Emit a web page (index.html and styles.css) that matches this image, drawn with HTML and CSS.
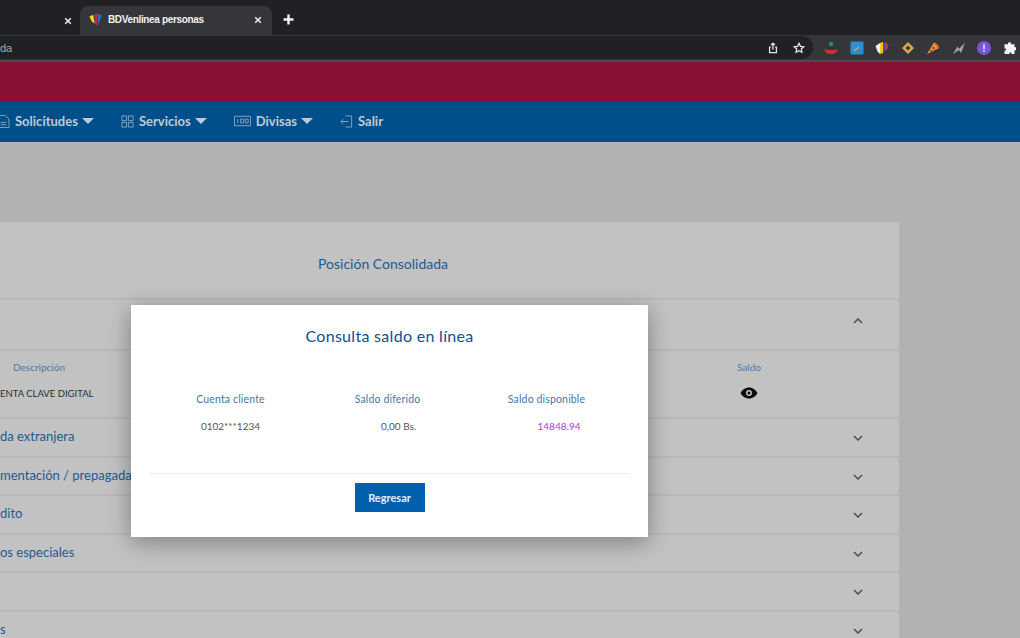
FILE: index.html
```html
<!DOCTYPE html>
<html lang="es">
<head>
	<meta charset="UTF-8">
	<title>BDVenlinea personas</title>
	<link rel="stylesheet" href="styles.css">
</head>
<body>
	<div class="tabbar">
		<div class="tab-old">
			<svg class="tab-x" viewBox="0 0 10 10"><path d="M1.5 1.5l7 7M8.5 1.5l-7 7"/></svg>
		</div>
		<div class="tab-active">
			<svg class="favicon" viewBox="0 0 14 16">
				<path d="M0 4l4.500-2L6 12 3 10z" fill="#f6d32a"/>
				<path d="M6 1.500L9 .5 8.500 15 6.500 12z" fill="#c9245f"/>
				<path d="M9.500 .5L14 3l-2.500 7-2 4z" fill="#2a6fc0"/>
			</svg>
			<span class="tab-title">BDVenlinea personas</span>
			<svg class="tab-x" viewBox="0 0 10 10"><path d="M1.5 1.5l7 7M8.5 1.5l-7 7"/></svg>
		</div>
		<svg class="tab-plus" viewBox="0 0 10 10"><path d="M5 .5v9M.5 5h9"/></svg>
	</div>

	<div class="toolbar">
		<div class="omnibox">
			<span class="url">da</span>
			<svg class="tool-icon" viewBox="0 0 14 14"><path d="M4.500 6H3v6.500h8V6H9.500M7 9V1.500M4.800 3.500L7 1.300l2.200 2.200"/></svg>
			<svg class="tool-icon" viewBox="0 0 14 14"><path d="M7 1.500l1.700 3.600 3.800.5-2.800 2.600.7 3.800L7 10.100l-3.400 1.900.7-3.800L1.500 5.600l3.800-.5z"/></svg>
		</div>
		<div class="extensions">
			<svg class="ext" viewBox="0 0 14 14"><circle cx="7" cy="3" r="2.200" fill="#1f8a8a"/><path d="M.5 8c2 1 4 1.200 6.500 1.200S11.500 9 13.500 8c0 3-3 5-6.500 5S.5 11 .5 8z" fill="#d8302c"/></svg>
			<svg class="ext" viewBox="0 0 14 14"><rect x=".5" y=".5" width="13" height="13" rx="1" fill="#2b8fd6"/><path d="M4 10l5-4" stroke="#d9a94a" stroke-width="1.500"/></svg>
			<svg class="ext" viewBox="0 0 14 14"><path d="M.5 5L5 2v11L2.500 10.500z" fill="#eee"/><path d="M5 2l3-1v11l-3 1z" fill="#f2c81e"/><path d="M8 1l2 .5V10l-2 2z" fill="#2456b8"/><path d="M10 1.500L13.500 3l-1 5-2.500 2z" fill="#d22c3c"/></svg>
			<svg class="ext" viewBox="0 0 14 14"><path d="M7 1L13 7 7 13 1 7zM7 4.500L4.500 7 7 9.500 9.500 7z" fill="#d8a94a" fill-rule="evenodd"/></svg>
			<svg class="ext" viewBox="0 0 14 14"><path d="M8 1.500c2.500.8 4.200 2.800 5 5.500L1 13z" fill="#e89a3c"/><path d="M8 1.500c2.500.8 4.200 2.800 5 5.500l-1.500.7c-.7-2.200-2.100-3.800-4.200-4.700z" fill="#c9702a"/><circle cx="7.500" cy="7" r="1.300" fill="#a33"/><circle cx="5" cy="9.800" r="1" fill="#a33"/></svg>
			<svg class="ext" viewBox="0 0 14 14"><path d="M1 13l4.500-7.500L7 8 13 1.500 9 12 7 9z" fill="#a5a6a9"/></svg>
			<svg class="ext" viewBox="0 0 14 14"><circle cx="7" cy="7" r="7" fill="#7a55d8"/><rect x="6.200" y="3.200" width="1.600" height="5" fill="#e8defa"/><rect x="6.200" y="9.200" width="1.600" height="1.600" fill="#e8defa"/></svg>
			<svg class="ext" viewBox="0 0 14 14"><path d="M5 1.500h3v1.800h3.500v3H13v3h-1.500V13h-3v-1.500h-2V13H1.500V9.500H3v-2H1.500V3.300H5z" fill="#f4f4f4"/></svg>
		</div>
	</div>

	<div class="brand"></div>

	<nav class="menu">
		<div class="menu-item">
			<svg class="menu-icon" viewBox="0 0 14 14"><path d="M1 .5h8l4 4v9H1zM4 8h6M4 10.500h6"/></svg>
			<span>Solicitudes</span><i class="caret"></i>
		</div>
		<div class="menu-item">
			<svg class="menu-icon" viewBox="0 0 14 14"><path d="M1 1h5v5H1zM8 1h5v5H8zM1 8h5v5H1zM8 8h5v5H8z"/></svg>
			<span>Servicios</span><i class="caret"></i>
		</div>
		<div class="menu-item">
			<svg class="menu-icon wide" viewBox="0 0 18 12"><path d="M.5 1h17v10H.5zM4 4v4M7 4h3v4H7zM12 4h3v4h-3z"/></svg>
			<span>Divisas</span><i class="caret"></i>
		</div>
		<div class="menu-item">
			<svg class="menu-icon" viewBox="0 0 14 14"><path d="M6 1h6.500v12H6M9 7H1M3.500 4.500L1 7l2.500 2.500"/></svg>
			<span>Salir</span>
		</div>
	</nav>

	<main class="content">
		<section class="card">
			<h2 class="card-title">Posición Consolidada</h2>
			<div class="row row-open">
				<svg class="chev" viewBox="0 0 10 6"><path d="M1 5l4-4 4 4"/></svg>
			</div>
			<div class="accounts">
				<div class="acc-col acc-desc">
					<span class="col-head">Descripción</span>
					<span class="acc-name">ENTA CLAVE DIGITAL</span>
				</div>
				<div class="acc-col acc-saldo">
					<span class="col-head">Saldo</span>
					<svg class="eye" viewBox="0 0 18 12"><path d="M9 .5C5 .5 2 3 .5 6 2 9 5 11.500 9 11.500S16 9 17.500 6C16 3 13 .5 9 .5zM9 3a3 3 0 1 1 0 6 3 3 0 0 1 0-6z" fill-rule="evenodd"/><circle cx="9" cy="6" r="1.500"/></svg>
				</div>
			</div>
			<div class="row"><span class="row-name">da extranjera</span><svg class="chev" viewBox="0 0 10 6"><path d="M1 1l4 4 4-4"/></svg></div>
			<div class="row"><span class="row-name">mentación / prepagada</span><svg class="chev" viewBox="0 0 10 6"><path d="M1 1l4 4 4-4"/></svg></div>
			<div class="row"><span class="row-name">dito</span><svg class="chev" viewBox="0 0 10 6"><path d="M1 1l4 4 4-4"/></svg></div>
			<div class="row"><span class="row-name">os especiales</span><svg class="chev" viewBox="0 0 10 6"><path d="M1 1l4 4 4-4"/></svg></div>
			<div class="row"><span class="row-name"></span><svg class="chev" viewBox="0 0 10 6"><path d="M1 1l4 4 4-4"/></svg></div>
			<div class="row"><span class="row-name">s</span><svg class="chev" viewBox="0 0 10 6"><path d="M1 1l4 4 4-4"/></svg></div>
		</section>
	</main>

	<div class="modal">
		<h3 class="modal-title">Consulta saldo en línea</h3>
		<div class="balance">
			<span class="balance-head">Cuenta cliente</span>
			<span class="balance-head">Saldo diferido</span>
			<span class="balance-head">Saldo disponible</span>
			<span class="balance-val">0102***1234</span>
			<span class="balance-val shift">0,00 Bs.</span>
			<span class="balance-val purple">14848.94</span>
		</div>
		<div class="modal-foot">
			<button class="btn">Regresar</button>
		</div>
	</div>
</body>
</html>
```
FILE: styles.css
```css
*{box-sizing: border-box;}
html,body{margin: 0;padding: 0;}
body{
	width: 1020px;
	height: 638px;
	overflow: hidden;
	position: relative;
	background: #b2b2b2;
	font-family: "Lato", "Open Sans", sans-serif;
}

/* browser */
.tabbar{
	height: 35px;
	background: #202124;
	display: flex;
	align-items: flex-end;
}
.tab-old{
	width: 80px;
	height: 28px;
	display: flex;
	align-items: center;
	justify-content: flex-end;
	padding-right: 8px;
}
.tab-active{
	width: 192px;
	height: 29px;
	background: #35363a;
	border-radius: 8px 8px 0 0;
	display: flex;
	align-items: center;
	padding: 0 10px 2px 9px;
}
.tab-x{
	width: 8px;
	height: 8px;
	fill: none;
	stroke: #e8e8e8;
	stroke-width: 2;
}
.favicon{
	width: 13px;
	height: 14px;
	margin-right: 6px;
}
.tab-title{
	flex: 1;
	font: bold 10px "Liberation Sans", sans-serif;
	letter-spacing: -0.35px;
	color: #f1f1f1;
}
.tab-plus{
	width: 11px;
	height: 11px;
	margin: 0 0 10px 11px;
	fill: none;
	stroke: #f4f4f4;
	stroke-width: 2.2;
}
.toolbar{
	height: 27px;
	background: #35363a;
	border-bottom: 2px solid #4a4b4e;
	display: flex;
	align-items: center;
}
.omnibox{
	width: 813px;
	height: 23px;
	background: #202124;
	border-radius: 0 12px 12px 0;
	display: flex;
	align-items: center;
	gap: 14px;
	padding-right: 8px;
}
.url{
	flex: 1;
	font: 11px "Liberation Sans", sans-serif;
	color: #a8a9ab;
}
.tool-icon{
	width: 12px;
	height: 12px;
	fill: none;
	stroke: #e4e4e4;
	stroke-width: 1.5;
}
.extensions{
	display: flex;
	align-items: center;
	gap: 11.500px;
	padding-left: 11px;
}
.ext{
	width: 14px;
	height: 14px;
}

/* site */
.brand{
	height: 40px;
	background: #8a1033;
}
.menu{
	height: 40px;
	background: #004e8a;
	display: flex;
	align-items: center;
	gap: 27px;
	padding-bottom: 2px;
	color: #bccbd9;
	font-size: 13px;
	font-weight: bold;
}
.menu-item{
	display: flex;
	align-items: center;
	gap: 5px;
}
.menu-item:first-child{
	margin-left: -3px;
}
.menu-icon{
	width: 13px;
	height: 13px;
	fill: none;
	stroke: #8aa7c0;
	stroke-width: 1;
}
.menu-icon.wide{
	width: 17px;
	height: 12px;
}
.caret{
	width: 0;
	height: 0;
	margin-left: -1px;
	border-left: 6.500px solid transparent;
	border-right: 6.500px solid transparent;
	border-top: 6px solid #bccbd9;
}
.content{
	width: 899px;
	padding-top: 80px;
}
.card{
	height: 420px;
	background: #c2c2c2;
}
.card-title{
	height: 78px;
	margin: 0;
	padding: 33px 0 0 318px;
	font-size: 14px;
	line-height: 18px;
	font-weight: normal;
	color: #1c5a92;
	border-bottom: 2px solid #b8b8b8;
}
.row{
	height: 38.500px;
	display: flex;
	align-items: center;
	justify-content: space-between;
	padding-right: 36px;
	border-bottom: 2px solid #b8b8b8;
	font-size: 13px;
	color: #1c5a92;
}
.row .chev{
	margin-top: 2px;
}
.row-name{
	margin-bottom: 2px;
}
.row-open{
	height: 51px;
	justify-content: flex-end;
	padding-bottom: 9px;
}
.chev{
	width: 10px;
	height: 6px;
	fill: none;
	stroke: #4d4d4d;
	stroke-width: 1.500;
}
.accounts{
	height: 68px;
	display: flex;
	padding-top: 9px;
	border-bottom: 2px solid #b8b8b8;
	font-size: 10px;
}
.acc-col{
	display: flex;
	flex-direction: column;
	align-items: center;
	gap: 13px;
}
.acc-desc{
	width: 78px;
}
.acc-saldo{
	margin-left: 624px;
	width: 94px;
	gap: 13px;
}
.col-head{
	color: #4b79a8;
	line-height: 14px;
}
.acc-name{
	color: #2e2e2e;
	font-size: 9.500px;
	line-height: 13px;
	white-space: nowrap;
	align-self: flex-start;
}
.eye{
	width: 18px;
	height: 12px;
	fill: #0c0c0c;
}

/* dialogo */
.modal{
	position: absolute;
	left: 131px;
	top: 305px;
	width: 517px;
	height: 232px;
	background: #fff;
	box-shadow: 0 5px 22px rgba(0,0,0,0.35);
	padding: 0 18px;
}
.modal-title{
	margin: 0;
	padding-top: 20px;
	font-size: 16px;
	line-height: 21px;
	font-weight: normal;
	letter-spacing: 0.3px;
	text-align: center;
	color: #0f4f94;
}
.balance{
	display: grid;
	grid-template-columns: 163px 151px 167px;
	row-gap: 13px;
	padding-top: 46px;
	text-align: center;
	font-size: 10px;
	line-height: 14px;
}
.balance-head{
	color: #3f78b0;
	font-size: 10.500px;
	letter-spacing: 0.15px;
	white-space: nowrap;
}
.balance-val{
	color: #555;
}
.shift{
	padding-left: 22px;
}
.purple{
	padding-left: 25px;
	color: #a83fd8;
}
.modal-foot{
	margin-top: 40px;
	border-top: 1px solid #ececec;
	padding-top: 9px;
	display: flex;
	justify-content: center;
}
.btn{
	width: 70px;
	height: 29px;
	border: 0;
	background: #0060ae;
	color: #e6eef6;
	font-family: inherit;
	font-size: 11px;
	font-weight: bold;
}
```
